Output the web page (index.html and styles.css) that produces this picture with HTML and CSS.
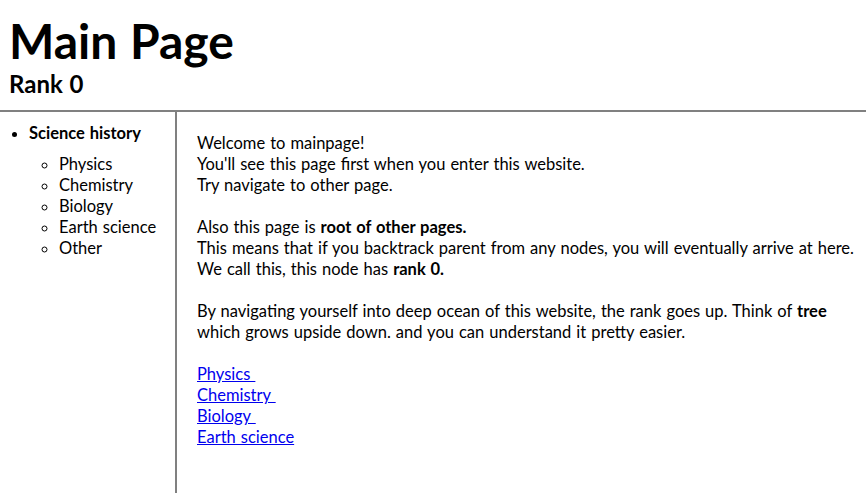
FILE: index.html
```html
<!DOCTYPE html>
<html lang="en">
<head>
<meta charset="utf-8">
<title>Main Page</title>
<link rel="stylesheet" href="styles.css">
</head>
<body>
<header class="top">
  <h1 class="title">Main Page</h1>
  <h2 class="rank">Rank 0</h2>
</header>
<div class="layout">
  <nav class="side">
    <ul class="tree">
      <li class="tree-head">Science history
        <ul class="sub">
          <li>Physics</li>
          <li>Chemistry</li>
          <li>Biology</li>
          <li>Earth science</li>
          <li>Other</li>
        </ul>
      </li>
    </ul>
  </nav>
  <main class="content">
    <p class="text">Welcome to mainpage!<br>
You'll see this page first when you enter this website.<br>
Try navigate to other page.<br>
<br>
Also this page is <b>root of other pages.</b><br>
This means that if you backtrack parent from any nodes, you will eventually arrive at here.<br>
We call this, this node has <b>rank 0.</b><br>
<br>
By navigating yourself into deep ocean of this website, the rank goes up. Think of <b>tree</b> which grows upside down. and you can understand it pretty easier.<br>
<br>
<a href="#">Physics&nbsp;</a><br>
<a href="#">Chemistry&nbsp;</a><br>
<a href="#">Biology&nbsp;</a><br>
<a href="#">Earth science</a></p>
  </main>
</div>
</body>
</html>
```
FILE: styles.css
```css
html, body {
  margin: 0;
  padding: 0;
  height: 100%;
}
body {
  font-family: "Lato", "Noto Sans", sans-serif;
  font-size: 16.5px;
  line-height: 21px;
  word-spacing: 0.8px;
  color: #000;
  background: #fff;
  display: flex;
  flex-direction: column;
}
.top {
  padding: 12px 9px 12px;
  border-bottom: 2px solid #808080;
}
.title {
  margin: 0;
  font-size: 48px;
  line-height: 57px;
  font-weight: bold;
  word-spacing: 1px;
}
.rank {
  margin: 0;
  font-size: 24px;
  line-height: 29px;
  font-weight: bold;
  word-spacing: 1px;
}
.layout {
  flex: 1;
  display: flex;
}
.side {
  width: 175px;
  flex: none;
  border-right: 2px solid #808080;
}
.tree {
  margin: 11px 0 0;
  padding-left: 29px;
  list-style: disc;
}
.tree-head {
  font-weight: bold;
}
.sub {
  margin: 10px 0 0;
  padding-left: 30px;
  list-style: circle;
  font-weight: normal;
}
.content {
  flex: 1;
  padding: 21px 0 0 20px;
}
.text {
  margin: 0;
}
.text a {
  color: #0000ee;
}
```
